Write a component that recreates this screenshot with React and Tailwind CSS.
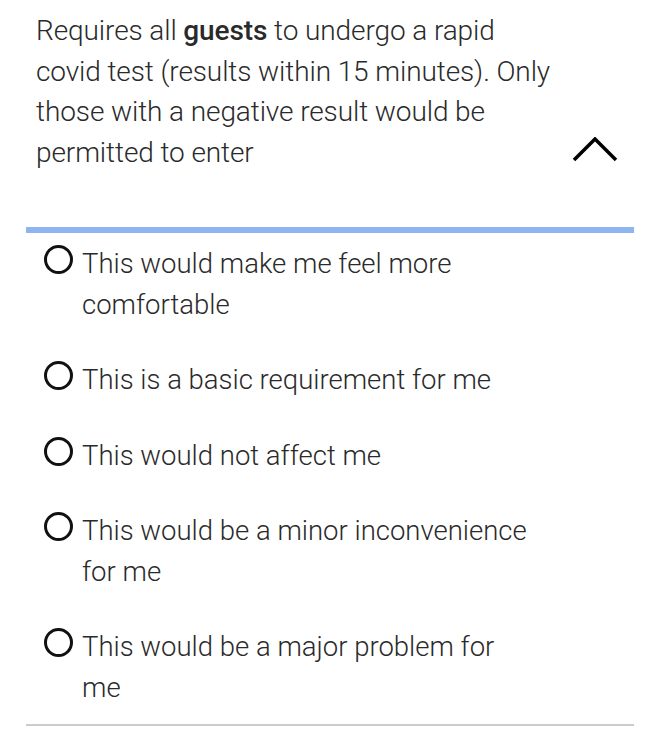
import React from "react";

const options = [
  ["This would make me feel more", "comfortable"],
  ["This is a basic requirement for me"],
  ["This would not affect me"],
  ["This would be a minor inconvenience", "for me"],
  ["This would be a major problem for", "me"],
];

export default function App() {
  return (
    <div className="w-[660px] h-[744px] bg-white overflow-hidden" style={{ fontFamily: "Roboto, 'Liberation Sans', sans-serif" }}>
      <div className="flex items-end justify-between pl-[36px] pr-[42px] pt-[11px]">
        <p className="text-[28px] font-light leading-[40.5px] text-[#2a2a2a] tracking-[-0.1px]">
          <span className="block">Requires all <b className="font-medium">guests</b> to undergo a rapid</span>
          <span className="block">covid test (results within 15 minutes). Only</span>
          <span className="block">those with a negative result would be</span>
          <span className="block">permitted to enter</span>
        </p>
        <svg width="46" height="26" viewBox="0 0 46 26" className="mb-[10px]">
          <polyline points="2,23 23,2 44,23" fill="none" stroke="#000" strokeWidth="3.5" />
        </svg>
      </div>
      <div className="mx-[26px] mt-[54px] h-[6px] bg-[#8fb5f0]" />
      <div className="flex flex-col gap-[35px] pl-[44px] pt-[11px]">
        {options.map((lines, i) => (
          <div key={i} className="flex items-start">
            <div className="mt-[1px] h-[29px] w-[29px] shrink-0 rounded-full border-[3.5px] border-[#111]" />
            <div className="ml-[9px] text-[27.5px] font-light leading-[40.5px] text-[#2a2a2a]">
              {lines.map((l, j) => (
                <span key={j} className="block">{l}</span>
              ))}
            </div>
          </div>
        ))}
      </div>
      <div className="mx-[26px] mt-[16px] h-[2px] bg-[#cccccc]" />
    </div>
  );
}
